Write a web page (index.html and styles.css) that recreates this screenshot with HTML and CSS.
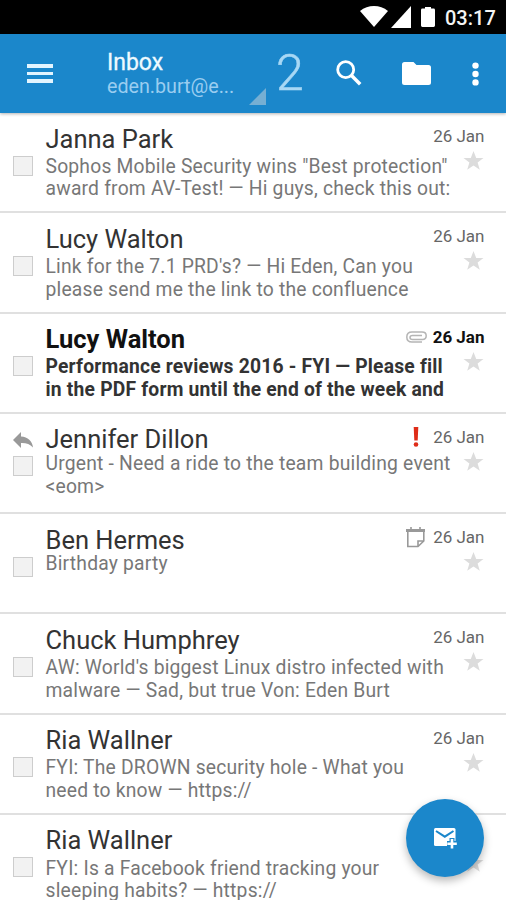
FILE: index.html
```html
<!DOCTYPE html>
<html lang="en">
<head>
<meta charset="utf-8">
<title>Inbox</title>
<link rel="stylesheet" href="styles.css">
</head>
<body>
<svg class="defs" width="0" height="0" aria-hidden="true">
  <symbol id="star" viewBox="0 0 20 20"><path d="M10 0l2.7 7H20l-5.9 4.5 2.2 7.3L10 14.5l-6.3 4.3 2.2-7.3L0 7h7.3z"/></symbol>
</svg>
<div class="screen">
  <div class="status">
    <svg class="wifi" viewBox="0 0 28 21"><path d="M0 5C8-1.6 20-1.6 28 5L14 21z"/></svg>
    <svg class="signal" viewBox="0 0 20 22"><path d="M20 0v22H0z"/></svg>
    <svg class="battery" viewBox="0 0 14 20"><path d="M4 0h6v1.6h2.6q1.4 0 1.4 1.4v15.6q0 1.4-1.4 1.4H1.4Q0 20 0 18.6V3q0-1.4 1.4-1.4H4z"/></svg>
    <span class="clock">03:17</span>
  </div>
  <header class="bar">
    <div class="burger"><i></i><i></i><i></i></div>
    <div class="folder-name"><div class="title">Inbox</div><div class="account">eden.burt@e...</div></div>
    <svg class="corner" viewBox="0 0 17 17"><path d="M17 0v17H0z"/></svg>
    <span class="count">2</span>
    <svg class="search" viewBox="0 0 26 26"><circle cx="9.7" cy="9.7" r="8" fill="none" stroke="#fff" stroke-width="2.8"/><path d="M15.5 15.500l8.700 8.700" stroke="#fff" stroke-width="3.500"/></svg>
    <svg class="folder" viewBox="0 0 29 23"><path d="M2.500 0h9l3 3H26.500Q29 3 29 5.500v15Q29 23 26.500 23h-24Q0 23 0 20.500v-18Q0 0 2.500 0z"/></svg>
    <svg class="more" viewBox="0 0 7 24"><circle cx="3.500" cy="3.600" r="3.200"/><circle cx="3.500" cy="12" r="3.200"/><circle cx="3.500" cy="20.400" r="3.200"/></svg>
  </header>
  <main class="list">
    <article class="mail">
      <div class="left"><span class="box"></span></div>
      <div class="text"><h2>Janna Park</h2><p>Sophos Mobile Security wins "Best protection"<br>award from AV-Test! — Hi guys, check this out:</p></div>
      <div class="right"><div class="date">26 Jan</div><svg class="star"><use href="#star"/></svg></div>
    </article>
    <article class="mail">
      <div class="left"><span class="box"></span></div>
      <div class="text"><h2>Lucy Walton</h2><p>Link for the 7.1 PRD's? — Hi Eden, Can you<br>please send me the link to the confluence</p></div>
      <div class="right"><div class="date">26 Jan</div><svg class="star"><use href="#star"/></svg></div>
    </article>
    <article class="mail unread">
      <div class="left"><span class="box"></span></div>
      <div class="text"><h2>Lucy Walton</h2><p>Performance reviews 2016 - FYI — Please fill<br>in the PDF form until the end of the week and</p></div>
      <div class="right"><div class="date"><svg class="clip" viewBox="0 0 21 12"><path d="M16 11H6Q.8 11 .8 6T6 1h10q4.200 0 4.200 3.700T16.500 8.500H6.500Q4 8.500 4 6.500T6.500 4.500H16"/></svg>26 Jan</div><svg class="star"><use href="#star"/></svg></div>
    </article>
    <article class="mail tight">
      <div class="left"><svg class="reply" viewBox="0 0 20 17"><path d="M8 0v4.600C15 5 19 9 20 15.500 17 12 13 10.800 8 11v5L0 8z"/></svg><span class="box"></span></div>
      <div class="text"><h2>Jennifer Dillon</h2><p>Urgent - Need a ride to the team building event<br>&lt;eom&gt;</p></div>
      <div class="right"><div class="date"><svg class="urgent" viewBox="0 0 6 20"><path d="M.7 0h4.600l-.6 13.500H1.300z"/><circle cx="3" cy="17.500" r="2.300"/></svg>26 Jan</div><svg class="star"><use href="#star"/></svg></div>
    </article>
    <article class="mail tight">
      <div class="left"><span class="box"></span></div>
      <div class="text"><h2>Ben Hermes</h2><p>Birthday party</p></div>
      <div class="right"><div class="date"><svg class="event" viewBox="0 0 20 21"><path d="M0 3.500h19" stroke-width="3"/><path d="M5 0v4M14 0v4M1.800 4v15.500H12L17.800 14V4M12 19.500V14h5.800"/></svg>26 Jan</div><svg class="star"><use href="#star"/></svg></div>
    </article>
    <article class="mail">
      <div class="left"><span class="box"></span></div>
      <div class="text"><h2>Chuck Humphrey</h2><p>AW: World's biggest Linux distro infected with<br>malware — Sad, but true Von: Eden Burt</p></div>
      <div class="right"><div class="date">26 Jan</div><svg class="star"><use href="#star"/></svg></div>
    </article>
    <article class="mail">
      <div class="left"><span class="box"></span></div>
      <div class="text"><h2>Ria Wallner</h2><p>FYI: The DROWN security hole - What you<br>need to know — https://</p></div>
      <div class="right"><div class="date">26 Jan</div><svg class="star"><use href="#star"/></svg></div>
    </article>
    <article class="mail">
      <div class="left"><span class="box"></span></div>
      <div class="text"><h2>Ria Wallner</h2><p>FYI: Is a Facebook friend tracking your<br>sleeping habits? — https://</p></div>
      <div class="right"><div class="date"></div><svg class="star"><use href="#star"/></svg></div>
    </article>
  </main>
  <div class="fab">
    <svg viewBox="0 0 23 21"><path class="paper" d="M1.500 0h18.500q1.500 0 1.500 1.500v15q0 1.500-1.500 1.500h-18.500Q0 18 0 16.500v-15Q0 0 1.500 0z"/><path class="flap" d="M2 3l8.800 5.700L19.500 3"/><path class="halo" d="M18 10v11M13 15.500h10"/><path class="plus" d="M18 11v9.500M13.300 15.700h9.500"/></svg>
  </div>
</div>
</body>
</html>
```
FILE: styles.css
```css
* { box-sizing: border-box; }
body { margin: 0; font-family: Roboto, "Liberation Sans", sans-serif; background: #fff; }
svg { display: block; flex: none; }
.defs { position: absolute; }
.screen { position: relative; width: 506px; height: 900px; overflow: hidden; }

.status { display: flex; height: 34px; background: #000; fill: #fff; color: #f4f4f4; }
.wifi { width: 28px; height: 21px; margin: 6px 0 0 360px; }
.signal { width: 20px; height: 22px; margin: 6px 0 0 3px; }
.battery { width: 14px; height: 20px; margin: 7px 0 0 10px; }
.clock { margin-left: 10px; font-size: 20px; font-weight: 500; line-height: 36px; white-space: nowrap; }

.bar { position: relative; display: flex; height: 79px; background: #1b87cb; fill: #fff; box-shadow: 0 1px 3px rgba(0, 0, 0, .3); }
.burger { display: flex; flex-direction: column; gap: 4px; width: 26px; margin: 30px 0 0 27px; }
.burger i { height: 3.500px; background: #e3f5ff; }
.folder-name { width: 142px; margin-left: 54px; white-space: nowrap; }
.title { margin-top: 17px; color: #eefaff; font-size: 23px; font-weight: 400; line-height: 24px; -webkit-text-stroke: .3px #eefaff; }
.account { color: #9acdf0; font-size: 19.700px; line-height: 24px; }
.corner { width: 17px; height: 17px; margin: 54px 0 0 0; fill: #76afd3; }
.count { width: 30px; margin-left: 10px; color: #a8d8f5; font-size: 50px; font-weight: 300; line-height: 78px; -webkit-text-stroke: .5px #a8d8f5; }
.search { width: 26px; height: 26px; margin: 26px 0 0 30px; }
.folder { width: 29px; height: 23px; margin: 28px 0 0 40px; }
.more { width: 7px; height: 24px; margin: 28px 0 0 41px; }

.mail { display: flex; height: 100.250px; border-bottom: 2px solid #e0e0e0; }
.left { position: relative; width: 45.500px; padding: 42.500px 0 0 12.500px; }
.box { display: block; width: 20px; height: 20px; border: 1.500px solid #cdcdcd; background: #f2f2f2; }
.reply { position: absolute; left: 13px; top: 18px; width: 20px; height: 17px; fill: #999; }
.text { width: 411.500px; white-space: nowrap; }
h2 { margin: 10.700px 0 0; color: #333; font-size: 25.500px; font-weight: 400; line-height: 30px; }
p { margin: 2.100px 0 0; color: #777; font-size: 19.300px; letter-spacing: .2px; line-height: 22.500px; }
.tight h2 { margin-top: 12.700px; line-height: 26px; }
.tight p { margin-top: .7px; }
.right { display: flex; flex-direction: column; align-items: flex-end; width: 27.500px; }
.date { display: flex; align-items: center; height: 24px; margin-top: 11px; color: #666; font-size: 17px; line-height: 24px; white-space: nowrap; }
.star { width: 21px; height: 20px; margin: 3px 1px 0 0; fill: #dcdcdc; }
.unread h2 { color: #111; font-weight: 700; }
.unread p { color: #333; font-weight: 700; }
.unread .date { color: #111; font-weight: 700; }
.clip { width: 21px; height: 12px; margin-right: 6px; fill: none; stroke: #b5b5b5; stroke-width: 1.500; }
.urgent { width: 6px; height: 20px; margin-right: 14px; fill: #df2c18; }
.event { width: 20px; height: 21px; margin-right: 7px; fill: none; stroke: #999; stroke-width: 1.600; }

.fab { position: absolute; left: 406px; top: 799px; display: flex; align-items: center; justify-content: center; width: 78px; height: 78px; border-radius: 50%; background: #1b87cb; box-shadow: 0 4px 8px rgba(0, 0, 0, .28); }
.fab svg { width: 23px; height: 21px; overflow: visible; }
.paper { fill: #fff; }
.flap, .halo { fill: none; stroke: #1b87cb; stroke-width: 2; }
.halo { stroke-width: 5; }
.plus { stroke: #fff; stroke-width: 2.600; }
```
